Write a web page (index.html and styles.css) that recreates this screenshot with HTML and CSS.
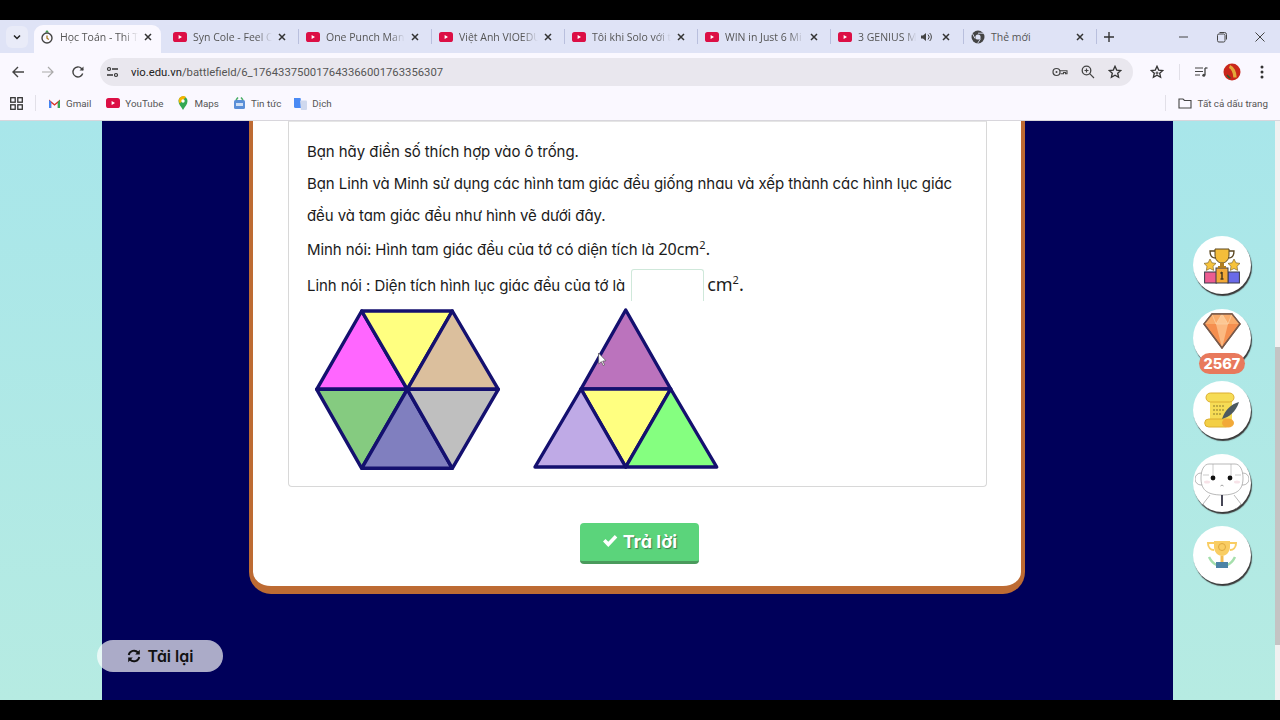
FILE: index.html
```html
<!DOCTYPE html>
<html lang="vi">
<head>
<meta charset="utf-8">
<title>Học Toán - Thi Tài</title>
<link rel="stylesheet" href="styles.css">
</head>
<body>
<svg class="defs" width="0" height="0">
  <symbol id="yt" viewBox="0 0 14 10"><rect width="14" height="10" rx="2.6" fill="#dc0f45"/><path d="M5.6 3v4l3.4-2z" fill="#fff"/></symbol>
  <symbol id="x" viewBox="0 0 10 10"><path d="M2 2l6 6M8 2l-6 6" stroke="#333" stroke-width="1.5" fill="none"/></symbol>
</svg>
<div class="bar-black"></div>
<header class="chrome">
  <div class="tabs">
    <div class="tab-menu"><svg width="10" height="10" viewBox="0 0 10 10"><path d="M2 3.5l3 3 3-3" stroke="#222" stroke-width="1.5" fill="none"/></svg></div>
    <div class="tab active">
      <svg class="fav" width="14" height="16" viewBox="0 0 14 16"><path d="M7 1l-2 2.400h4z" fill="#3c9a4a"/><circle cx="7" cy="9" r="5" fill="none" stroke="#444" stroke-width="1.400"/><path d="M7 6.500v2.700l1.800 1.300" stroke="#a8791e" stroke-width="1.300" fill="none"/></svg>
      <span class="tab-title">Học Toán - Thi T</span>
      <svg class="close" width="10" height="10"><use href="#x"/></svg>
    </div>
    <div class="tab"><svg class="fav" width="14" height="10"><use href="#yt"/></svg><span class="tab-title">Syn Cole - Feel C</span><svg class="close" width="10" height="10"><use href="#x"/></svg></div>
    <div class="tab sep"><svg class="fav" width="14" height="10"><use href="#yt"/></svg><span class="tab-title">One Punch Man</span><svg class="close" width="10" height="10"><use href="#x"/></svg></div>
    <div class="tab sep"><svg class="fav" width="14" height="10"><use href="#yt"/></svg><span class="tab-title">Việt Anh VIOEDU</span><svg class="close" width="10" height="10"><use href="#x"/></svg></div>
    <div class="tab sep"><svg class="fav" width="14" height="10"><use href="#yt"/></svg><span class="tab-title">Tôi khi Solo với t</span><svg class="close" width="10" height="10"><use href="#x"/></svg></div>
    <div class="tab sep"><svg class="fav" width="14" height="10"><use href="#yt"/></svg><span class="tab-title">WIN in Just 6 Mi</span><svg class="close" width="10" height="10"><use href="#x"/></svg></div>
    <div class="tab sep tab-audio"><svg class="fav" width="14" height="10"><use href="#yt"/></svg><span class="tab-title">3 GENIUS M</span>
      <svg class="sound" width="13" height="12" viewBox="0 0 13 12"><path d="M1 4.500v3h2l3 2.500v-8L3 4.500z" fill="#444"/><path d="M8 3.500a3.500 3.500 0 0 1 0 5M9.700 2a5.600 5.600 0 0 1 0 8" stroke="#444" fill="none"/></svg>
      <svg class="close" width="10" height="10"><use href="#x"/></svg></div>
    <div class="tab sep"><svg class="fav" width="14" height="14" viewBox="0 0 14 14"><circle cx="7" cy="7" r="6.500" fill="#444"/><circle cx="7" cy="7" r="2.600" fill="#dfe3f6"/><path d="M7 3.200h5.600M4 8.500L1.600 3.800M9.600 8.600l-3 4.800" stroke="#dfe3f6" stroke-width=".9"/></svg><span class="tab-title plain">Thẻ mới</span><svg class="close" width="10" height="10"><use href="#x"/></svg></div>
    <div class="new-tab"><svg width="12" height="12" viewBox="0 0 12 12"><path d="M6 1v10M1 6h10" stroke="#333" stroke-width="1.400"/></svg></div>
    <div class="win-controls">
      <svg width="12" height="12" viewBox="0 0 12 12"><path d="M1 6h9" stroke="#444"/></svg>
      <svg width="12" height="12" viewBox="0 0 12 12"><rect x="1.500" y="3" width="7.500" height="8" rx="1.400" fill="none" stroke="#444"/><path d="M3.500 1.500h5a2 2 0 0 1 2 2v5" fill="none" stroke="#444"/></svg>
      <svg width="12" height="12" viewBox="0 0 12 12"><path d="M1.500 1.500l9 9M10.500 1.500l-9 9" stroke="#444"/></svg>
    </div>
  </div>
  <div class="toolbar">
    <svg class="nav" width="14" height="14" viewBox="0 0 14 14"><path d="M13 7H2M7 2L2 7l5 5" fill="none" stroke="#444" stroke-width="1.400"/></svg>
    <svg class="nav" width="14" height="14" viewBox="0 0 14 14"><path d="M1 7h11M7 2l5 5-5 5" fill="none" stroke="#aaa" stroke-width="1.200"/></svg>
    <svg class="nav" width="14" height="14" viewBox="0 0 14 14"><path d="M11.700 8.500A5 5 0 1 1 10.500 3.400L12 5" fill="none" stroke="#444" stroke-width="1.400"/><path d="M12.500 1.500V5.500H8.500z" fill="#444"/></svg>
    <div class="omnibox">
      <svg class="site" width="13" height="12" viewBox="0 0 13 12"><circle cx="3" cy="3" r="1.500" fill="none" stroke="#333" stroke-width="1.200"/><path d="M6 3h6M1 9h6" stroke="#333" stroke-width="1.300"/><circle cx="10" cy="9" r="1.500" fill="none" stroke="#333" stroke-width="1.200"/></svg>
      <span class="url">vio.edu.vn<span class="url-path">/battlefield/6_176433750017643366001763356307</span></span>
      <svg class="omni-icon" width="16" height="12" viewBox="0 0 16 12"><circle cx="4.500" cy="6" r="3.500" fill="none" stroke="#444" stroke-width="1.200"/><circle cx="4.500" cy="6" r="1" fill="#444"/><path d="M8 4.700h7v3h-1.500v-1.200h-2v1.200h-3" fill="none" stroke="#444" stroke-width="1.100"/></svg>
      <svg class="omni-icon omni-zoom" width="14" height="14" viewBox="0 0 14 14"><circle cx="5.500" cy="5.500" r="4.300" fill="none" stroke="#444" stroke-width="1.300"/><path d="M8.700 8.700l4.300 4.300M3.500 5.500h4M5.500 3.500v4" stroke="#444" stroke-width="1.200"/></svg>
      <svg class="omni-icon omni-zoom" width="14" height="14" viewBox="0 0 14 14"><path d="M7 1.300l1.700 3.800 4.100.4-3.100 2.700.9 4.100L7 10.200l-3.600 2.100.9-4.100L1.200 5.500l4.100-.4z" fill="none" stroke="#333" stroke-width="1.300"/></svg>
    </div>
    <svg class="tool" width="14" height="14" viewBox="0 0 14 14"><path d="M7 1.300l1.700 3.800 4.100.4-3.100 2.700.9 4.100L7 10.200l-3.600 2.100.9-4.100L1.200 5.500l4.100-.4z" fill="none" stroke="#333" stroke-width="1.300"/><path d="M5.500 8h3M7 6.500v3" stroke="#333"/></svg>
    <span class="divider tool-div"></span>
    <svg class="tool" width="14" height="12" viewBox="0 0 14 12"><path d="M1 2h8M1 5.500h8M1 9h5" stroke="#444" stroke-width="1.200"/><path d="M11 2v7" stroke="#444" stroke-width="1.300"/><circle cx="9.800" cy="9.300" r="1.500" fill="#444"/><path d="M11 2h2.500" stroke="#444" stroke-width="1.300"/></svg>
    <span class="avatar"><svg width="18" height="18" viewBox="0 0 18 18"><circle cx="9" cy="9" r="8.500" fill="#c9271b"/><path d="M6.500 3.500c3 1 5.500 6 5.500 11" fill="none" stroke="#e3a93a" stroke-width="3.400"/><path d="M4 12c1 1.500 2 2.500 3.500 3" fill="none" stroke="#2f5a2a" stroke-width="1.500"/></svg></span>
    <svg class="tool" width="4" height="14" viewBox="0 0 4 14"><circle cx="2" cy="2" r="1.500" fill="#333"/><circle cx="2" cy="7" r="1.500" fill="#333"/><circle cx="2" cy="12" r="1.500" fill="#333"/></svg>
  </div>
  <nav class="bookmarks">
    <svg class="apps" width="13" height="13" viewBox="0 0 13 13"><g fill="none" stroke="#333" stroke-width="1.300"><rect x=".7" y=".7" width="4.500" height="4.500"/><rect x="7.800" y=".7" width="4.500" height="4.500"/><rect x=".7" y="7.800" width="4.500" height="4.500"/><rect x="7.800" y="7.800" width="4.500" height="4.500"/></g></svg>
    <span class="divider bm-div"></span>
    <span class="bm"><svg width="13" height="10" viewBox="0 0 13 10"><path d="M1 10V1.500L6.500 6 12 1.500V10h-2.200V5L6.500 7.800 3.200 5v5z" fill="#d93025"/><path d="M1 10V2l2.200 2v6z" fill="#4285f4"/><path d="M12 10V2L9.800 4v6z" fill="#34a853"/></svg>Gmail</span>
    <span class="bm"><svg width="14" height="10"><use href="#yt"/></svg>YouTube</span>
    <span class="bm bm-maps"><svg width="10" height="14" viewBox="0 0 10 14"><path d="M5 14C3 10.500.5 8.500.5 5a4.500 4.500 0 0 1 9 0C9.500 8.500 7 10.500 5 14z" fill="#34a853"/><path d="M1 3a4.500 4.500 0 0 1 7-2L1.800 7.500A5 5 0 0 1 1 3z" fill="#f4b400"/><circle cx="5" cy="5" r="1.700" fill="#fff"/></svg>Maps</span>
    <span class="bm bm-news"><svg width="13" height="12" viewBox="0 0 13 12"><rect x="1" y="3" width="11" height="9" rx="1.500" fill="#5b8fd8"/><path d="M3 3l2-2.500M10 3L8 .5" stroke="#4caf6a" stroke-width="1.500"/><rect x="3" y="6" width="7" height="3" fill="#cfe0f6"/></svg>Tin tức</span>
    <span class="bm"><svg width="14" height="13" viewBox="0 0 14 13"><path d="M1 1h6.500l2 10H2.500a1.500 1.500 0 0 1-1.500-1.500z" fill="#4a8af4"/><path d="M7 3.500h6a1 1 0 0 1 1 1V12a1 1 0 0 1-1 1H8z" fill="#cfd8ee"/></svg>Dịch</span>
    <span class="all-marks"><span class="divider"></span><svg width="14" height="11" viewBox="0 0 14 11"><path d="M1 1h4l1.500 1.500H13V10H1z" fill="none" stroke="#444" stroke-width="1.100"/></svg>Tất cả dấu trang</span>
  </nav>
</header>
<main class="viewport">
  <div class="aqua-left"></div>
  <section class="stage">
    <article class="card">
      <div class="question">
        <p class="line">Bạn hãy điền số thích hợp vào ô trống.</p>
        <p class="line">Bạn Linh và Minh sử dụng các hình tam giác đều giống nhau và xếp thành các hình lục giác</p>
        <p class="line">đều và tam giác đều như hình vẽ dưới đây.</p>
        <p class="line line-math">Minh nói: Hình tam giác đều của tớ có diện tích là <span class="math">20cm<sup>2</sup>.</span></p>
        <div class="line line-answer"><span class="answer-label">Linh nói : Diện tích hình lục giác đều của tớ là</span><span class="answer"></span><span class="math math-big">cm<sup>2</sup>.</span></div>
        <svg class="figure" width="420" height="180" viewBox="307 300 420 180">
          <g stroke="#14106f" stroke-width="3.400" stroke-linejoin="round">
            <path d="M361.700 311L407.300 389.300H316.700z" fill="#ff66ff"/>
            <path d="M361.700 311H452.300L407.300 389.300z" fill="#ffff80"/>
            <path d="M452.300 311L498.300 389.300H407.300z" fill="#dbbf9d"/>
            <path d="M316.700 389.300H407.300L361.700 468.300z" fill="#85cb80"/>
            <path d="M407.300 389.300L452.300 468.300H361.700z" fill="#807fbf"/>
            <path d="M407.300 389.300H498.300L452.300 468.300z" fill="#bfbfbf"/>
            <path d="M625.700 310L670.700 389H581z" fill="#bb73bd"/>
            <path d="M581 389H670.700L625.700 467z" fill="#ffff80"/>
            <path d="M581 389L625.700 467H535z" fill="#bfaae6"/>
            <path d="M670.700 389L716.700 467H625.700z" fill="#85ff80"/>
          </g>
          <path d="M598.500 353l.3 11 2.500-2.400 2 4 1.300-.7-1.900-3.800 3.300-.3z" fill="#fff" stroke="#555" stroke-width=".7"/>
        </svg>
      </div>
      <div class="submit-row">
        <button class="submit" type="button"><svg width="16" height="14" viewBox="0 0 16 14"><path d="M1 7.500l2.500-2.500 2.800 2.800L12.800 1 15.300 3.500 6.300 13z" fill="#fff"/></svg>Trả lời</button>
      </div>
    </article>
    <button class="reload" type="button"><svg width="14" height="14" viewBox="0 0 14 14"><path d="M1.700 6A5.400 5.400 0 0 1 11 3.500M12.300 8A5.400 5.400 0 0 1 3 10.500" fill="none" stroke="#111" stroke-width="1.900"/><path d="M12.800 .8v4.600H8.200zM1.200 13.200V8.600h4.600z" fill="#111"/></svg>Tải lại</button>
  </section>
  <aside class="rail">
    <div class="orb">
      <svg class="ic-podium" width="36" height="36" viewBox="0 0 36 36"><rect x=".6" y="24" width="12" height="11" fill="#ec5d92" stroke="#3a3a4a"/><rect x="24" y="24" width="11.400" height="11" fill="#6a6ae8" stroke="#3a3a4a"/><rect x="12" y="20" width="12" height="15" fill="#f2a938" stroke="#3a3a4a"/><path d="M11 1h14v6c0 5-3.500 8-7 8s-7-3-7-8z" fill="#f4bd3a" stroke="#5a4620"/><path d="M11 3H6c0 5 2.500 7 5.500 7M25 3h5c0 5-2.500 7-5.500 7" fill="none" stroke="#5a4620" stroke-width="1.300"/><path d="M16 15h4v3h-4zM14 18h8v2h-8z" fill="#b07d20"/><path d="M6 11l1.900 3.800 4.100.6-3 2.900.7 4.100L6 20.500l-3.700 1.900.7-4.100-3-2.900 4.100-.6zM30 11l1.900 3.800 4.100.6-3 2.900.7 4.100-3.700-1.900-3.700 1.900.7-4.100-3-2.900 4.100-.6z" fill="#f7c33c" stroke="#6b5422" stroke-width=".6"/><path d="M18 24v7M16.500 31h3M16.500 25.500l1.500-1.500" fill="none" stroke="#4a3a20" stroke-width="1.500"/></svg>
    </div>
    <div class="orb orb-gem">
      <svg width="38" height="36" viewBox="0 0 38 36"><path d="M9 1h20l8 10-18 24L1 11z" fill="#f58f4f" stroke="#7a5a4a" stroke-width="1.400"/><path d="M9 1h20l8 10H1z" fill="#f9ab6b"/><path d="M13 11h12l-6 24z" fill="#fbb981"/><path d="M19 1l-6 10h12zM9 1l4 10M29 1l-4 10" fill="#fcc793" stroke="#fad3a8" stroke-width=".7"/><path d="M9 1h20l8 10-18 24L1 11z" fill="none" stroke="#7a5a4a" stroke-width="1.400"/></svg>
      <span class="gem-count">2567</span>
    </div>
    <div class="orb">
      <svg width="36" height="36" viewBox="0 0 36 36"><rect x="6" y="6" width="22" height="24" fill="#f6dc55"/><rect x="2" y="1" width="28" height="9" rx="4.500" fill="#f6dc55" stroke="#dcae30"/><rect x=".7" y="27" width="25" height="8" rx="4" fill="#f3cf45" stroke="#dcae30"/><path d="M9 14h12M9 18h11M9 22h8" stroke="#8a7a30" stroke-dasharray="2 1"/><path d="M35 10C27 12 21 18 18 27c7-2 14-7 17-17z" fill="#4d5a60"/><ellipse cx="24" cy="31" rx="6" ry="4.500" fill="#f2a938"/></svg>
    </div>
    <div class="orb">
      <svg width="54" height="56" viewBox="0 0 54 56" fill="none" stroke="#888" stroke-width=".6"><circle cx="6" cy="24" r="6" fill="#fff"/><circle cx="48" cy="24" r="6" fill="#fff"/><path d="M14 9h26c5 0 8 6 8 14 0 11-5 17-21 17S6 34 6 23C6 15 9 9 14 9z" fill="#fff"/><path d="M18 9v12M36 9v12M8 20h6M40 20h6" stroke="#aaa"/><ellipse cx="12" cy="27" rx="3" ry="1.500" fill="#f7e3e8" stroke="none"/><ellipse cx="42" cy="27" rx="3" ry="1.500" fill="#f7e3e8" stroke="none"/><circle cx="18" cy="23" r="2.400" fill="#111" stroke="none"/><circle cx="35" cy="23" r="2.400" fill="#111" stroke="none"/><path d="M25.500 31c1-1 2-1 3 0" stroke="#555"/><path d="M15 40l-7 9 5 5M39 40l7 9-5 5"/><path d="M27 40v11" stroke="#334" stroke-width="1.800"/></svg>
    </div>
    <div class="orb">
      <svg width="32" height="32" viewBox="0 0 32 32"><path d="M3 18c2 4 5 7 8 8M29 18c-2 4-5 7-8 8" fill="none" stroke="#a5dfac" stroke-width="2.500"/><path d="M8 2h16v6c0 5-4 9-8 9s-8-4-8-9z" fill="#f9cd63"/><path d="M8 4H2c0 5 3 7 6 7M24 4h6c0 5-3 7-6 7" fill="none" stroke="#f9cd63" stroke-width="2"/><circle cx="16" cy="8" r="3.500" fill="none" stroke="#e0a93e"/><path d="M14.500 17h3v6h-3z" fill="#f2bc52"/><rect x="10" y="23" width="12" height="6" fill="#4c84a6"/></svg>
    </div>
  </aside>
  <div class="scrollbar"><div class="thumb"></div></div>
</main>
<div class="bar-black"></div>
</body>
</html>
```
FILE: styles.css
```css
* { box-sizing: border-box; }
html, body { margin: 0; height: 720px; overflow: hidden; background: #000; }
body { display: flex; flex-direction: column; font-family: "Noto Sans", sans-serif; }
.defs { position: absolute; }
.bar-black { height: 20px; flex: none; background: #000; }

.chrome { flex: none; height: 101px; background: #faf8ff; color: #444; }
.tabs { display: flex; align-items: center; height: 33px; background: #dfe3f6; position: relative; font-family: "Open Sans", sans-serif; font-size: 10.500px; }
.tab-menu { width: 22px; height: 22px; margin: 0 6px; border-radius: 6px; background: #e9ebf8; display: flex; align-items: center; justify-content: center; flex: none; }
.tab { flex: none; width: 133px; height: 33px; padding: 0 11px 0 8.300px; display: flex; align-items: center; position: relative; }
.tab.active { width: 127px; padding: 0 8px 4px 6px; margin-right: 3.700px; background: #faf8ff; border-radius: 9px 9px 0 0; height: 28px; align-self: flex-end; }
.tab.sep::before, .new-tab::before { content: ""; position: absolute; left: 0; top: 9px; height: 15px; width: 1px; background: #b9bfdd; }
.tab-audio { padding-right: 12px; }
.tab .fav { flex: none; margin-right: 6px; }
.tab-title { flex: 1; min-width: 0; white-space: nowrap; color: #555; -webkit-mask-image: linear-gradient(90deg, #000 76%, transparent 94%); mask-image: linear-gradient(90deg, #000 76%, transparent 94%); }
.tab-title.plain { -webkit-mask-image: none; mask-image: none; }
.tab .close { flex: none; }
.sound { flex: none; margin-right: 8px; }
.new-tab { width: 26px; height: 33px; display: flex; align-items: center; justify-content: center; flex: none; position: relative; }
.win-controls { margin-left: auto; display: flex; gap: 26px; padding-right: 14px; }

.toolbar { height: 38px; display: flex; align-items: center; padding: 0 16px 0 11px; background: #faf8ff; border-radius: 10px 10px 0 0; }
.nav { flex: none; margin-right: 16px; }
.omnibox { flex: 1; height: 28px; margin-left: -1px; margin-right: 17px; border-radius: 14px; background: #e9e7ee; display: flex; align-items: center; padding: 0 11px 0 6px; }
.site { flex: none; margin-right: 12px; }
.url { flex: 1; font-family: Roboto, sans-serif; font-size: 11.300px; color: #222; white-space: nowrap; padding-top: 1px; }
.url-path { color: #555; }
.omni-icon { flex: none; margin-left: 12px; }
.omni-zoom { margin-left: 13px; }
.tool { flex: none; }
.divider { display: inline-block; width: 1px; height: 16px; background: #e2e0e8; flex: none; }
.tool-div { margin: 0 14px 0 15px; }
.avatar { flex: none; width: 18px; height: 18px; margin: 0 19px 0 15px; display: block; line-height: 0; }

.bookmarks { height: 30px; display: flex; align-items: center; padding: 0 12px 5px 10px; font-family: Roboto, sans-serif; font-size: 9.800px; border-bottom: 1px solid #d8d6dc; background: #faf8ff; }
.apps { flex: none; }
.bm-div { margin: 0 12px 0 12px; }
.bm { display: flex; align-items: center; gap: 5px; margin-right: 15px; color: #555; white-space: nowrap; }
.bm-maps { gap: 6px; margin-right: 14px; }
.bm-news { margin-right: 12px; }
.bm svg { flex: none; }
.all-marks { margin-left: auto; display: flex; align-items: center; gap: 6px; color: #555; }
.all-marks .divider { margin: 0 6px 0 0; }

.viewport { flex: none; height: 579px; display: flex; overflow: hidden; position: relative; }
.aqua-left { flex: none; width: 102px; background: linear-gradient(180deg, #a8e6ea, #b6ebe2); }
.stage { flex: none; width: 1071px; background: #00005a; display: flex; flex-direction: column; align-items: flex-start; padding-left: 147px; }
.card { width: 776px; height: 473px; background: #fff; border: solid #bd6b33; border-width: 0 4px 8px; border-radius: 0 0 22px 22px; padding: 0 34px 0 35px; flex: none; }
.question { height: 366px; border: 1px solid #d8d8d8; border-top-color: #e5e5e5; border-radius: 0 0 4px 4px; padding: 14px 18px 0; font-family: Inter, sans-serif; font-feature-settings: "cv11" 1; font-size: 15px; letter-spacing: -0.08px; color: #1b1b1b; position: relative; }
.line { margin: 0; height: 32px; line-height: 32px; white-space: nowrap; }
.line-math { height: 33px; line-height: 34px; }
.line-answer { display: flex; align-items: center; height: 40px; }
.answer-label { padding-top: 2px; }
.math { font-family: "Noto Sans", sans-serif; font-size: 16px; letter-spacing: 0; color: #1b1b1b; }
.math sup { font-size: 11px; line-height: 0; }
.math-big { font-size: 18px; padding-bottom: 2px; }
.answer { width: 73px; height: 32px; margin: 0 3px 0 6px; border: 1px solid #cfe8da; border-bottom: 0; border-radius: 3px 3px 0 0; flex: none; }
.figure { display: block; margin: -5px 0 0 0; }
.submit-row { display: flex; justify-content: flex-start; padding: 36px 0 0 292px; }
.submit { width: 119px; height: 41px; padding: 0 0 2px; background: #5bd47b; border: 0; border-bottom: 3px solid #4a9a5c; border-radius: 4px; display: flex; align-items: center; justify-content: center; gap: 5px; color: #fff; font-family: Inter, sans-serif; font-feature-settings: "cv11" 1; font-size: 18px; font-weight: 700; text-shadow: 1px 1px 1px #3b7a4e; }
.reload { position: absolute; left: 97px; top: 519px; width: 126px; height: 32px; border: 0; border-radius: 16px; background: rgba(255, 255, 255, 0.67); display: flex; align-items: center; justify-content: center; gap: 7px; font-family: Inter, sans-serif; font-feature-settings: "cv11" 1; font-size: 16px; font-weight: 600; color: #111; padding: 0; }

.rail { flex: none; width: 102px; padding: 115px 0 0 20px; background: linear-gradient(180deg, #a8e6ea, #b6ebe2); display: flex; flex-direction: column; gap: 14.500px; }
.orb { width: 58px; height: 58px; flex: none; border-radius: 50%; background: #fff; box-shadow: 1px 2px 1px #3a3a3a; display: flex; align-items: center; justify-content: center; position: relative; }
.ic-podium { margin-top: 1px; }
.orb-gem svg { margin-top: -14px; }
.gem-count { position: absolute; left: 6px; top: 44px; width: 46px; height: 21px; border-radius: 11px; background: #e8795c; color: #fff; font-family: Inter, sans-serif; font-size: 14.500px; font-weight: 800; line-height: 21px; text-align: center; }
.scrollbar { flex: none; width: 5px; background: #f1f1f1; }
.thumb { margin-top: 226px; height: 298px; background: #c4c4c4; }
```
